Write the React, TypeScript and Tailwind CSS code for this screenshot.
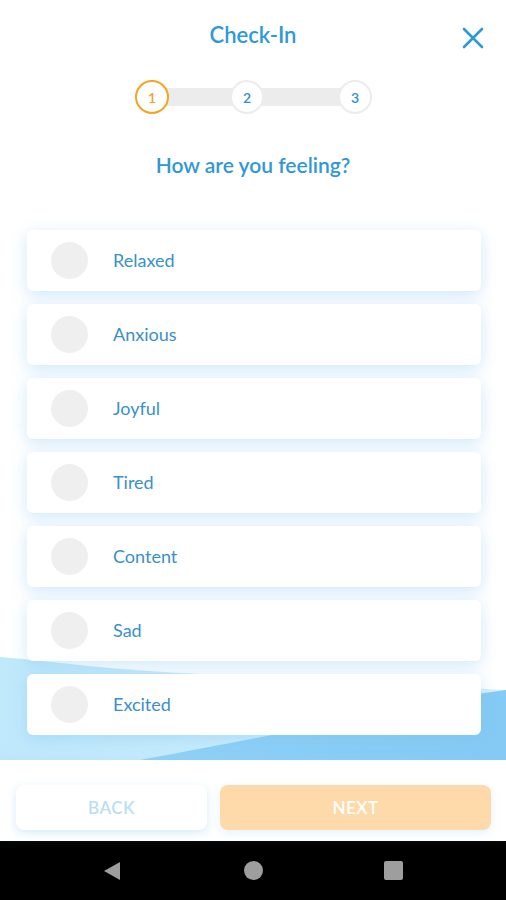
import React from "react";

const moods = ["Relaxed", "Anxious", "Joyful", "Tired", "Content", "Sad", "Excited"];

export default function App() {
  const font = { fontFamily: "Lato, 'Open Sans', sans-serif" };
  return (
    <div className="w-[506px] h-[900px] flex flex-col bg-white overflow-hidden" style={font}>
      {/* header */}
      <div className="relative h-[70px] shrink-0 flex items-start justify-center pt-[20px]">
        <div className="text-[22px] leading-[29px] font-semibold text-[#2c9ad9]">Check-In</div>
        <div className="absolute right-[22px] top-[27px] w-[22px] h-[22px]">
          <svg width="22" height="22" viewBox="0 0 22 22">
            <path d="M2 2 L20 20 M20 2 L2 20" stroke="#2c9ad9" strokeWidth="2.6" strokeLinecap="round" />
          </svg>
        </div>
      </div>

      {/* stepper */}
      <div className="h-[36px] mt-[9px] shrink-0 flex items-center pl-[135px]">
        <div className="w-[34px] h-[34px] rounded-full border-2 border-[#f4a41f] bg-white flex items-center justify-center text-[14px] text-[#f4a41f] font-semibold z-10">1</div>
        <div className="w-[65px] h-[18px] bg-[#ececec] -mx-[2px]" />
        <div className="w-[34px] h-[34px] rounded-full border-2 border-[#ececec] bg-white flex items-center justify-center text-[14px] text-[#2c8fd0] font-semibold z-10">2</div>
        <div className="w-[78px] h-[18px] bg-[#ececec] -mx-[2px]" />
        <div className="w-[34px] h-[34px] rounded-full border-2 border-[#ececec] bg-white flex items-center justify-center text-[14px] text-[#2c8fd0] font-semibold z-10">3</div>
      </div>

      {/* question */}
      <div className="mt-[37px] h-[26px] shrink-0 text-center text-[21px] leading-[26px] font-semibold text-[#3197d6]">
        How are you feeling?
      </div>

      {/* list area */}
      <div className="relative flex-1 pt-[52px]">
        <svg className="absolute left-0 bottom-0" width="506" height="110" viewBox="0 0 506 110">
          <defs>
            <linearGradient id="lg1" x1="0" y1="0" x2="1" y2="0">
              <stop offset="0" stopColor="#bfe8fb" />
              <stop offset="1" stopColor="#d4f1fd" />
            </linearGradient>
            <linearGradient id="lg2" x1="0" y1="0" x2="1" y2="0">
              <stop offset="0" stopColor="#8fd2f6" />
              <stop offset="1" stopColor="#84caf4" />
            </linearGradient>
          </defs>
          <path d="M0 7 C 60 12, 110 20, 200 24 L 506 40 L 506 110 L 0 110 Z" fill="url(#lg1)" />
          <path d="M506 40 L 470 45 C 400 60, 300 80, 140 110 L 506 110 Z" fill="url(#lg2)" />
        </svg>
        <div className="relative flex flex-col gap-[13px] px-[27px] pr-[25px]">
          {moods.map((m) => (
            <div
              key={m}
              className="h-[61px] bg-white rounded-[6px] flex items-center shadow-[0_4px_16px_rgba(120,190,240,0.35)]"
            >
              <div className="ml-[24px] w-[37px] h-[37px] rounded-full bg-[#efefef]" />
              <div className="ml-[25px] text-[18px] text-[#3a90cb]">{m}</div>
            </div>
          ))}
        </div>
      </div>

      {/* footer */}
      <div className="h-[81px] shrink-0 bg-white flex items-start gap-[13px] pt-[25px] px-[16px] pr-[15px] shadow-[0_-2px_8px_rgba(150,200,240,0.15)] z-10">
        <div className="w-[191px] h-[45px] rounded-[8px] bg-white shadow-[0_3px_10px_rgba(120,190,240,0.3)] flex items-center justify-center text-[17px] font-semibold tracking-[0.5px] text-[#b9dff5]">
          BACK
        </div>
        <div className="flex-1 h-[45px] rounded-[8px] bg-[#fed9a9] shadow-[0_3px_10px_rgba(120,190,240,0.2)] flex items-center justify-center text-[17px] font-semibold tracking-[0.5px] text-white">
          NEXT
        </div>
      </div>

      {/* nav bar */}
      <div className="h-[59px] shrink-0 bg-black flex items-center justify-center">
        <div className="w-[506px] flex items-center">
          <div className="w-[103px]" />
          <svg width="18" height="20" viewBox="0 0 18 20">
            <path d="M17 1 L17 19 L1 10 Z" fill="#9e9e9e" />
          </svg>
          <div className="w-[123px]" />
          <div className="w-[19px] h-[19px] rounded-full bg-[#9e9e9e]" />
          <div className="w-[121px]" />
          <div className="w-[19px] h-[19px] rounded-[2px] bg-[#9e9e9e]" />
        </div>
      </div>
    </div>
  );
}
